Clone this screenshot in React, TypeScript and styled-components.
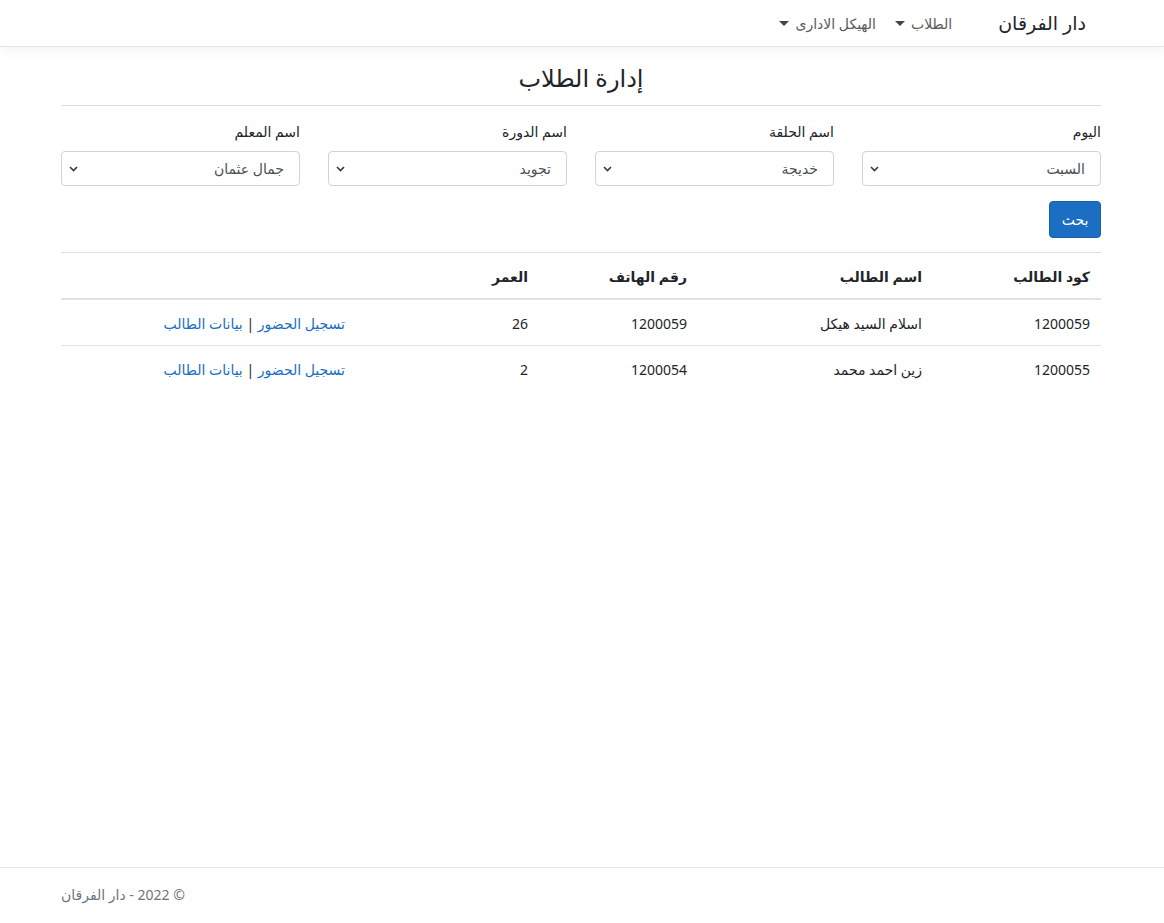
import React from "react";
import styled, { createGlobalStyle } from "styled-components";

const Global = createGlobalStyle`
  html, body { margin: 0; padding: 0; }
  body {
    font-family: "Segoe UI", "Noto Sans", "DejaVu Sans", sans-serif;
    font-size: 14px;
    line-height: 1.5;
    color: #212529;
    background: #fff;
  }
  * { box-sizing: border-box; }
`;

const Page = styled.div`
  direction: rtl;
  min-height: 923px;
  display: flex;
  flex-direction: column;
`;

const NavBar = styled.header`
  height: 47px;
  border-bottom: 1px solid #e5e5e5;
  box-shadow: 0 4px 12px rgba(0, 0, 0, 0.05);
  display: flex;
  align-items: center;
  padding: 0 78px 0 0;
`;

const Brand = styled.a`
  font-size: 19px;
  color: #212529;
  text-decoration: none;
  margin-left: 46px;
`;

const NavItem = styled.a`
  color: #5a5a5a;
  font-size: 14px;
  text-decoration: none;
  display: flex;
  align-items: center;
  gap: 4px;
  margin-left: 19px;
  &::after {
    content: "";
    border-top: 5px solid #444;
    border-left: 5px solid transparent;
    border-right: 5px solid transparent;
    margin-right: 2px;
    margin-top: 1px;
  }
`;

const Main = styled.main`
  margin: 0 63px 0 61px;
  flex: 1;
  padding-top: 16px;
`;

const Title = styled.h3`
  margin: 0;
  text-align: center;
  font-size: 24px;
  font-weight: 500;
  line-height: 30px;
`;

const Rule = styled.hr<{ $top: number; $bottom: number }>`
  border: 0;
  border-top: 1px solid #dedede;
  margin: ${(p) => p.$top}px 0 ${(p) => p.$bottom}px;
`;

const Filters = styled.div`
  display: grid;
  grid-template-columns: repeat(4, 239px);
  column-gap: 28px;
`;

const Field = styled.div`
  display: flex;
  flex-direction: column;
`;

const Label = styled.label`
  font-size: 14px;
  line-height: 21px;
  margin-bottom: 9px;
  color: #212529;
`;

const SelectBox = styled.div`
  height: 35px;
  border: 1px solid #ced4da;
  border-radius: 4px;
  display: flex;
  align-items: center;
  justify-content: space-between;
  padding: 0 15px 0 7px;
  color: #495057;
  font-size: 14px;
`;

const Chevron = () => (
  <svg width="9" height="6" viewBox="0 0 9 6">
    <path d="M1 1 L4.5 4.5 L8 1" fill="none" stroke="#343a40" strokeWidth="1.6" />
  </svg>
);

const ButtonRow = styled.div`
  margin-top: 15px;
  display: flex;
`;

const PrimaryButton = styled.button`
  height: 37px;
  width: 52px;
  background: #1b6ec2;
  border: 1px solid #1861ac;
  border-radius: 4px;
  color: #fff;
  font-family: inherit;
  font-size: 14px;
  padding: 0;
`;

const Table = styled.table`
  width: 100%;
  border-collapse: collapse;
  font-size: 14px;
`;

const Th = styled.th<{ $w?: number }>`
  text-align: right;
  font-weight: 700;
  padding: 13px 11px 11px;
  line-height: 21px;
  border-bottom: 2px solid #dee2e6;
  width: ${(p) => (p.$w ? `${p.$w}px` : "auto")};
`;

const Td = styled.td`
  text-align: right;
  padding: 13px 11px 11px;
  line-height: 21px;
  border-top: 1px solid #dee2e6;
`;

const Row = styled.tr`
  &:first-child td { border-top: 0; }
`;

const Link = styled.a`
  color: #1b6ec2;
  text-decoration: none;
`;

const Footer = styled.footer`
  border-top: 1px solid #e5e5e5;
  height: 56px;
  display: flex;
  align-items: center;
  justify-content: flex-end;
  padding: 0 61px 2px;
  color: #6c757d;
  font-size: 14px;
`;

const filters = [
  { label: "اليوم", value: "السبت" },
  { label: "اسم الحلقة", value: "خديجة" },
  { label: "اسم الدورة", value: "تجويد" },
  { label: "اسم المعلم", value: "جمال عثمان" },
];

const students = [
  { code: "1200059", name: "اسلام السيد هيكل", phone: "1200059", age: "26" },
  { code: "1200055", name: "زين احمد محمد", phone: "1200054", age: "2" },
];

export default function App() {
  return (
    <>
      <Global />
      <Page>
        <NavBar>
          <Brand href="#">دار الفرقان</Brand>
          <NavItem href="#">الطلاب</NavItem>
          <NavItem href="#">الهيكل الادارى</NavItem>
        </NavBar>
        <Main>
          <Title>إدارة الطلاب</Title>
          <Rule $top={12} $bottom={15} />
          <Filters>
            {filters.map((f) => (
              <Field key={f.label}>
                <Label>{f.label}</Label>
                <SelectBox>
                  <span>{f.value}</span>
                  <Chevron />
                </SelectBox>
              </Field>
            ))}
          </Filters>
          <ButtonRow>
            <PrimaryButton>بحث</PrimaryButton>
          </ButtonRow>
          <Rule $top={14} $bottom={0} />
          <Table>
            <thead>
              <tr>
                <Th $w={168}>كود الطالب</Th>
                <Th $w={235}>اسم الطالب</Th>
                <Th $w={159}>رقم الهاتف</Th>
                <Th $w={183}>العمر</Th>
                <Th></Th>
              </tr>
            </thead>
            <tbody>
              {students.map((s) => (
                <Row key={s.code}>
                  <Td>{s.code}</Td>
                  <Td>{s.name}</Td>
                  <Td>{s.phone}</Td>
                  <Td>{s.age}</Td>
                  <Td>
                    <Link href="#">تسجيل الحضور</Link> | <Link href="#">بيانات الطالب</Link>
                  </Td>
                </Row>
              ))}
            </tbody>
          </Table>
        </Main>
        <Footer>© 2022 - دار الفرقان</Footer>
      </Page>
    </>
  );
}
